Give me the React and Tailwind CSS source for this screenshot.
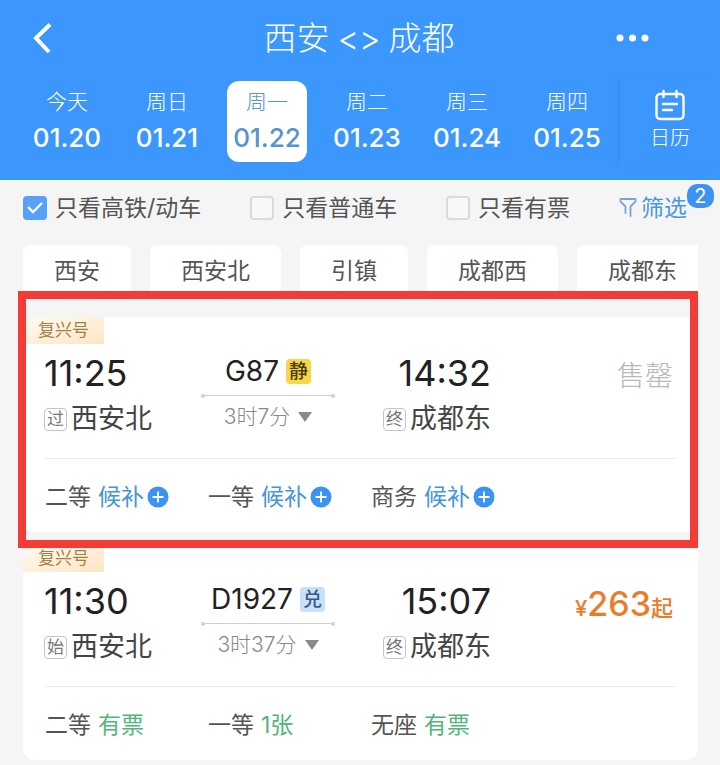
import React, { useState } from 'react';

const days = [
    { week: '今天', date: '01.20' },
    { week: '周日', date: '01.21' },
    { week: '周一', date: '01.22' },
    { week: '周二', date: '01.23' },
    { week: '周三', date: '01.24' },
    { week: '周四', date: '01.25' },
];

const stations = ['西安', '西安北', '引镇', '成都西', '成都东'];

const trains = [
    {
        number: 'G87',
        badge: '静',
        badgeStyle: 'bg-[#f7d748] text-[#4a3c10]',
        depart: '11:25',
        arrive: '14:32',
        fromType: '过',
        from: '西安北',
        toType: '终',
        to: '成都东',
        duration: '3时7分',
        price: null,
        highlighted: true,
        seats: [
            { name: '二等', status: '候补', waitlist: true },
            { name: '一等', status: '候补', waitlist: true },
            { name: '商务', status: '候补', waitlist: true },
        ],
    },
    {
        number: 'D1927',
        badge: '兑',
        badgeStyle: 'bg-[#c9e0fa] text-[#34598c]',
        depart: '11:30',
        arrive: '15:07',
        fromType: '始',
        from: '西安北',
        toType: '终',
        to: '成都东',
        duration: '3时37分',
        price: 263,
        highlighted: false,
        seats: [
            { name: '二等', status: '有票' },
            { name: '一等', status: '1张' },
            { name: '无座', status: '有票' },
        ],
    },
];

const Header = ({ selected, onSelect }) => (
    <header className="bg-[#3c97fc] text-white h-[180px]">
        <div className="flex items-center justify-between h-[76px] pl-8 pr-[70px]">
            <button aria-label="返回">
                <svg width="20" height="32" viewBox="0 0 20 32" fill="none" stroke="currentColor" strokeWidth="4">
                    <path d="M18 2.5 L4 16 L17 30" />
                </svg>
            </button>
            <h1 className="flex items-center gap-2 text-[33px] leading-10 font-light pl-[50px]">
                <span>西安</span>
                <span>&lt;&gt;</span>
                <span>成都</span>
            </h1>
            <button aria-label="更多">
                <svg width="34" height="8" viewBox="0 0 34 8" fill="currentColor">
                    <circle cx="4" cy="4" r="3.5" />
                    <circle cx="16.5" cy="4" r="3.5" />
                    <circle cx="29" cy="4" r="3.5" />
                </svg>
            </button>
        </div>
        <div className="flex pl-[17px]">
            <div className="grid grid-cols-6 flex-1 justify-items-center pt-[5px]">
                {days.map((day, index) => (
                    <button
                        key={day.date}
                        onClick={() => onSelect(index)}
                        className={`flex flex-col items-center w-20 h-[81px] pt-1 rounded-xl ${
                            index === selected ? 'bg-white text-[#5494cf]' : ''
                        }`}
                    >
                        <span className="text-[21px] leading-[34px] font-light">{day.week}</span>
                        <span className="text-[26px] leading-[38px] font-medium">{day.date}</span>
                    </button>
                ))}
            </div>
            <button className="flex flex-col items-center w-[100px] ml-[3px] h-[90px] pt-[13px] shadow-[-4px_0_5px_-3px_rgba(30,110,210,0.3)]">
                <svg width="32" height="32" viewBox="0 0 32 32" fill="none" stroke="currentColor" strokeWidth="2.4" strokeLinecap="round">
                    <rect x="2.5" y="5" width="27" height="25" rx="3.5" />
                    <path d="M9.5 2v6M22.5 2v6M9 15h14M9 21h9" />
                </svg>
                <span className="text-[20px] leading-[34px] font-light">日历</span>
            </button>
        </div>
    </header>
);

const CheckItem = ({ label, checked, onChange }) => (
    <label className="flex items-center gap-2 text-[23px] leading-8">
        <span className="relative flex">
            <input
                type="checkbox"
                checked={checked}
                onChange={onChange}
                className="appearance-none size-6 rounded-sm border-2 border-[#dadada] bg-[#f8f8f8] checked:bg-[#57a2f8] checked:border-[#57a2f8]"
            />
            {checked && (
                <svg className="absolute inset-0 pointer-events-none" width="24" height="24" viewBox="0 0 24 24" fill="none" stroke="#fff" strokeWidth="2.4">
                    <path d="M5 11l5 5 9-9" />
                </svg>
            )}
        </span>
        {label}
    </label>
);

const Station = ({ type, name }) => (
    <div className="flex items-center gap-1 h-9 mt-1.5 text-[27px] text-[#444]">
        <span className="flex items-center justify-center size-[23px] border border-[#c4c4c4] rounded-sm text-[17px] leading-none text-[#777]">
            {type}
        </span>
        {name}
    </div>
);

const TrainCard = ({ train }) => (
    <div className="relative">
        <article className="bg-white rounded-xl overflow-hidden">
            <div className="w-[81px] h-[27px] pl-[15px] text-[17px] leading-[27px] text-[#a2813f] bg-linear-to-br from-[#fffaf2] to-[#fce5c5]">
                复兴号
            </div>
            <div className="grid grid-cols-[157px_134px_156px_1fr] px-[21px] pt-[7px]">
                <div>
                    <div className="text-[36px] leading-[44px] text-[#222]">{train.depart}</div>
                    <Station type={train.fromType} name={train.from} />
                </div>
                <div>
                    <div className="flex items-center justify-center gap-[7px] h-10 text-[28px] text-[#222]">
                        {train.number}
                        <span className={`flex items-center justify-center size-[25px] rounded-sm text-[19px] leading-none font-medium ${train.badgeStyle}`}>
                            {train.badge}
                        </span>
                    </div>
                    <div className="flex items-center h-[9px]">
                        <span className="size-1 rounded-full bg-[#d0d0d0]" />
                        <span className="flex-1 h-px bg-[#d0d0d0]" />
                        <span className="size-1 rounded-full bg-[#d0d0d0]" />
                    </div>
                    <button className="flex items-center justify-center gap-2 w-full h-[34px] text-[21px] font-light text-[#888]">
                        {train.duration}
                        <svg width="14" height="10" viewBox="0 0 14 10" fill="#8a8a8a">
                            <path d="M0 0h14L7 10z" />
                        </svg>
                    </button>
                </div>
                <div className="flex flex-col items-end">
                    <div className="text-[36px] leading-[44px] text-[#222]">{train.arrive}</div>
                    <Station type={train.toType} name={train.to} />
                </div>
                <div className="text-right leading-[50px] pr-1">
                    {train.price ? (
                        <span className="text-[#e87e2c] font-medium">
                            <span className="text-[22px]">¥</span>
                            <span className="text-[34px]">{train.price}</span>
                            <span className="text-[22px]">起</span>
                        </span>
                    ) : (
                        <span className="text-[28px] font-light text-[#b8b8b8]">售罄</span>
                    )}
                </div>
            </div>
            <div className="mx-[22px] mt-[21px] border-t border-[#ececec] grid grid-cols-[163px_163px_1fr] items-center h-[74px] pt-[3px] text-[23px]">
                {train.seats.map((seat) => (
                    <div key={seat.name} className="flex items-center">
                        <span className="text-[#555] mr-[7px]">{seat.name}</span>
                        {seat.waitlist ? (
                            <button className="flex items-center gap-[3px] text-[#4496d6]">
                                {seat.status}
                                <svg width="22" height="22" viewBox="0 0 22 22">
                                    <circle cx="11" cy="11" r="10.5" fill="#3b93f3" />
                                    <path d="M11 5.5v11M5.5 11h11" stroke="#fff" strokeWidth="1.8" />
                                </svg>
                            </button>
                        ) : (
                            <span className="text-[#52b57a]">{seat.status}</span>
                        )}
                    </div>
                ))}
            </div>
        </article>
        {train.highlighted && (
            <div className="absolute -top-[26px] -bottom-4 -left-[5px] right-0 z-10 border-8 border-[#f53b35] pointer-events-none" />
        )}
    </div>
);

const App = () => {
    const [selectedDay, setSelectedDay] = useState(2);
    const [filters, setFilters] = useState({ highSpeed: true, normal: false, available: false });

    const toggle = (key) => setFilters({ ...filters, [key]: !filters[key] });

    return (
        <div className="min-h-screen bg-[#f5f5f5] text-[#555] font-['Inter','Noto_Sans_CJK_SC',sans-serif]">
            <Header selected={selectedDay} onSelect={setSelectedDay} />

            {/* Filters */}
            <div className="flex items-center justify-between h-14 pl-[23px] pr-[33px]">
                <CheckItem label="只看高铁/动车" checked={filters.highSpeed} onChange={() => toggle('highSpeed')} />
                <CheckItem label="只看普通车" checked={filters.normal} onChange={() => toggle('normal')} />
                <CheckItem label="只看有票" checked={filters.available} onChange={() => toggle('available')} />
                <button className="relative flex items-center gap-1 h-6 text-[23px] text-[#4a98dc]">
                    <svg width="18" height="22" viewBox="0 0 18 22" fill="none" stroke="#7aa3dc" strokeWidth="1.8" strokeLinejoin="round" strokeLinecap="round">
                        <path d="M6.5 16V9.5L1.5 4.5V2h15v2.500L11.5 9.500V19" />
                    </svg>
                    筛选
                    <span className="absolute left-full -top-3 flex items-center justify-center w-[27px] h-6 rounded-[10px] bg-[#3d93f3] text-white text-[20px]">
                        2
                    </span>
                </button>
            </div>

            <main className="pl-[23px] pr-[22px]">
                {/* Station tabs */}
                <div className="flex gap-[19px] mt-[9px] overflow-hidden">
                    {stations.map((station) => (
                        <button key={station} className="shrink-0 h-[52px] px-[31px] bg-white rounded-lg text-[23px]">
                            {station}
                        </button>
                    ))}
                </div>

                <div className="flex flex-col gap-[13px] mt-5">
                    {trains.map((train) => (
                        <TrainCard key={train.number} train={train} />
                    ))}
                </div>
            </main>
        </div>
    );
};

export default App;
